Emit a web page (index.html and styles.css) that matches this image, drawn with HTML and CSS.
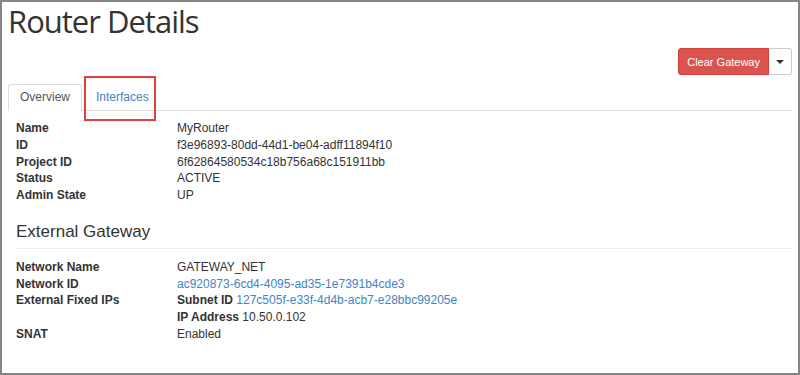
FILE: index.html
```html
<!DOCTYPE html>
<html lang="en">

<head>
    <meta charset="UTF-8">
    <meta name="viewport" content="width=device-width, initial-scale=1.0">
    <title>Router Details</title>
    <link rel="stylesheet" href="styles.css">
</head>

<body>
    <div class="frame">
        <h1 class="page-title">Router Details</h1>

        <div class="actions">
            <div class="btn-group">
                <button class="btn btn-danger">Clear Gateway</button>
                <button class="btn btn-toggle"><span class="caret"></span></button>
            </div>
        </div>

        <ul class="tabs">
            <li class="tab active"><a href="#">Overview</a></li>
            <li class="tab highlighted"><a href="#">Interfaces</a></li>
        </ul>

        <div class="detail">
            <dl class="info">
                <dt>Name</dt>
                <dd>MyRouter</dd>
                <dt>ID</dt>
                <dd>f3e96893-80dd-44d1-be04-adff11894f10</dd>
                <dt>Project ID</dt>
                <dd>6f62864580534c18b756a68c151911bb</dd>
                <dt>Status</dt>
                <dd>ACTIVE</dd>
                <dt>Admin State</dt>
                <dd>UP</dd>
            </dl>

            <h4 class="section-title">External Gateway</h4>
            <hr class="divider">

            <dl class="info">
                <dt>Network Name</dt>
                <dd>GATEWAY_NET</dd>
                <dt>Network ID</dt>
                <dd><a href="#">ac920873-6cd4-4095-ad35-1e7391b4cde3</a></dd>
                <dt>External Fixed IPs</dt>
                <dd>
                    <div><strong>Subnet ID</strong> <a href="#">127c505f-e33f-4d4b-acb7-e28bbc99205e</a></div>
                    <div><strong>IP Address</strong> 10.50.0.102</div>
                </dd>
                <dt>SNAT</dt>
                <dd>Enabled</dd>
            </dl>
        </div>
    </div>
</body>

</html>
```

FILE: styles.css
```css
body {
    margin: 0;
    font-family: "Liberation Sans", Arial, sans-serif;
    font-size: 12px;
    color: #333;
}

a {
    color: #3d85c6;
    text-decoration: none;
}

.frame {
    height: 375px;
    box-sizing: border-box;
    border: 2px solid #858585;
    padding: 0 6px;
    background: #fff;
}

.page-title {
    margin: 1px 0 0;
    font-family: "Open Sans", "Noto Sans", sans-serif;
    font-size: 31px;
    font-weight: 400;
    line-height: 36px;
    letter-spacing: -1px;
    color: #333;
}

.actions {
    display: flex;
    justify-content: flex-end;
    margin-top: 9px;
}

.btn-group {
    display: flex;
}

.btn {
    height: 27px;
    font-family: "Liberation Sans", Arial, sans-serif;
    font-size: 11px;
    white-space: nowrap;
    border: 1px solid transparent;
    cursor: pointer;
}

.btn-danger {
    padding: 0 8px;
    color: #fff;
    background: #d9534f;
    border-color: #d43f3a;
    border-radius: 3px 0 0 3px;
}

.btn-toggle {
    width: 23px;
    padding: 0;
    background: #fff;
    border-color: #ccc;
    border-left: none;
    border-radius: 0 3px 3px 0;
    display: flex;
    align-items: center;
    justify-content: center;
}

.caret {
    width: 0;
    height: 0;
    border-top: 4px solid #333;
    border-left: 4px solid transparent;
    border-right: 4px solid transparent;
}

.tabs {
    display: flex;
    margin: 9px 0 0;
    padding: 0;
    list-style: none;
    border-bottom: 1px solid #ddd;
}

.tab {
    position: relative;
    margin: 0 2px -1px 0;
}

.tab a {
    display: block;
    padding: 4px 11px;
    line-height: 17px;
    border: 1px solid transparent;
    border-radius: 3px 3px 0 0;
}

.tab.active a {
    color: #555;
    background: #fff;
    border-color: #ddd #ddd transparent;
}

.tab.highlighted::after {
    content: "";
    position: absolute;
    left: 0;
    top: -8px;
    right: 5px;
    bottom: -10px;
    border: 2px solid #e1403c;
}

.detail {
    padding: 9px 0 0 8px;
}

.info {
    display: grid;
    grid-template-columns: 161px 1fr;
    margin: 0;
    line-height: 16.75px;
}

.info dt {
    font-weight: bold;
}

.info dd {
    margin: 0;
}

.section-title {
    margin: 18px 0 0;
    font-size: 17px;
    font-weight: 400;
    line-height: 20px;
}

.divider {
    margin: 6px 0 10px;
    border: 0;
    border-top: 1px solid #eee;
}
```
